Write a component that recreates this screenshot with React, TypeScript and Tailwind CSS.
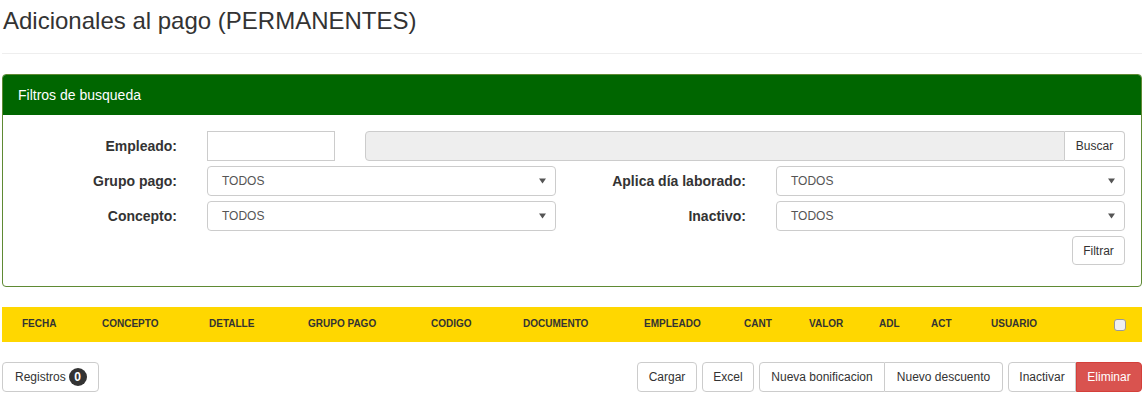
import React from 'react';

const columns = [
    { label: 'FECHA', w: 'w-[100px] pl-[20px]' },
    { label: 'CONCEPTO', w: 'w-[107px]' },
    { label: 'DETALLE', w: 'w-[99px]' },
    { label: 'GRUPO PAGO', w: 'w-[123px]' },
    { label: 'CODIGO', w: 'w-[92px]' },
    { label: 'DOCUMENTO', w: 'w-[121px]' },
    { label: 'EMPLEADO', w: 'w-[100px]' },
    { label: 'CANT', w: 'w-[65px]' },
    { label: 'VALOR', w: 'w-[70px]' },
    { label: 'ADL', w: 'w-[52px]' },
    { label: 'ACT', w: 'w-[60px]' },
    { label: 'USUARIO', w: 'w-[123px]' },
];

const Select = ({ value }: { value: string }) => (
    <div className="w-[349px] h-[30px] border border-[#ccc] rounded-[4px] bg-white flex items-center justify-between pl-[14px] pr-[9px] text-[12px] text-[#555]">
        <span>{value}</span>
        <svg width="7" height="6" viewBox="0 0 7 6">
            <path d="M0 0.5 L7 0.5 L3.5 5.5 Z" fill="#555" />
        </svg>
    </div>
);

const Label = ({ text, w }: { text: string; w: string }) => (
    <label className={`${w} text-right font-bold text-[14px] text-[#333]`}>{text}</label>
);

export default function App() {
    return (
        <div className="w-[1146px] min-h-[400px] bg-white font-['Liberation_Sans',Arial,sans-serif] text-[#333]">
            <div className="pl-[2px] pr-[4px]">
                {/* Title */}
                <h1 className="pt-[8px] pl-[1px] text-[24px] leading-[26px] font-normal">
                    Adicionales al pago (PERMANENTES)
                </h1>
                <div className="mt-[19px] border-t border-[#eee]" />

                {/* Filters panel */}
                <div className="mt-[20px] border border-[#5f8a34] rounded-[4px] overflow-hidden">
                    <div className="h-[40px] bg-[#006600] px-[15px] flex items-center text-white text-[14px]">
                        Filtros de busqueda
                    </div>
                    <div className="pt-[16px] pb-[21px] flex flex-col gap-[5px]">
                        <div className="flex items-center">
                            <Label text="Empleado:" w="w-[174px]" />
                            <input className="ml-[30px] w-[128px] h-[30px] border border-[#ccc] outline-none" />
                            <div className="ml-[30px] flex w-[760px] h-[30px]">
                                <div className="flex-1 bg-[#eee] border border-[#ccc] rounded-l-[4px]" />
                                <button className="w-[60px] border border-l-0 border-[#ccc] rounded-r-[4px] bg-white text-[12px] text-[#333]">
                                    Buscar
                                </button>
                            </div>
                        </div>
                        <div className="flex items-center">
                            <Label text="Grupo pago:" w="w-[174px]" />
                            <div className="ml-[30px]"><Select value="TODOS" /></div>
                            <Label text="Aplica día laborado:" w="w-[190px]" />
                            <div className="ml-[30px]"><Select value="TODOS" /></div>
                        </div>
                        <div className="flex items-center">
                            <Label text="Concepto:" w="w-[174px]" />
                            <div className="ml-[30px]"><Select value="TODOS" /></div>
                            <Label text="Inactivo:" w="w-[190px]" />
                            <div className="ml-[30px]"><Select value="TODOS" /></div>
                        </div>
                        <div className="flex justify-end pr-[16px]">
                            <button className="w-[53px] h-[29px] border border-[#ccc] rounded-[4px] bg-white text-[12px] text-[#333]">
                                Filtrar
                            </button>
                        </div>
                    </div>
                </div>

                {/* Table header */}
                <div className="mt-[20px] h-[35px] bg-[#ffd700] flex items-center pb-[3px]">
                    {columns.map((c) => (
                        <div key={c.label} className={`${c.w} shrink-0 text-[10px] font-bold text-[#333]`}>
                            {c.label}
                        </div>
                    ))}
                    <div className="w-[12px] h-[12px] mt-[4px] rounded-[3px] border border-[#999] bg-[#f0f0f0]" />
                </div>

                {/* Footer actions */}
                <div className="mt-[20px] flex items-center justify-between text-[12px]">
                    <button className="h-[30px] w-[97px] pl-[12px] border border-[#ccc] rounded-[4px] bg-white flex items-center gap-[3px]">
                        Registros
                        <span className="w-[18px] h-[18px] rounded-full bg-[#333] text-white font-bold text-[12px] flex items-center justify-center">
                            0
                        </span>
                    </button>
                    <div className="flex items-center gap-[5px]">
                        <button className="h-[30px] w-[60px] border border-[#ccc] rounded-[4px] bg-white">Cargar</button>
                        <button className="h-[30px] w-[52px] border border-[#ccc] rounded-[4px] bg-white">Excel</button>
                        <div className="flex">
                            <button className="h-[30px] w-[126px] border border-[#ccc] rounded-l-[4px] bg-white">Nueva bonificacion</button>
                            <button className="h-[30px] w-[118px] border border-l-0 border-[#ccc] rounded-r-[4px] bg-white">Nuevo descuento</button>
                        </div>
                        <div className="flex">
                            <button className="h-[30px] w-[68px] border border-[#ccc] rounded-l-[4px] bg-white">Inactivar</button>
                            <button className="h-[30px] w-[66px] border border-[#d43f3a] rounded-r-[4px] bg-[#d9534f] text-white">Eliminar</button>
                        </div>
                    </div>
                </div>
            </div>
        </div>
    );
}
